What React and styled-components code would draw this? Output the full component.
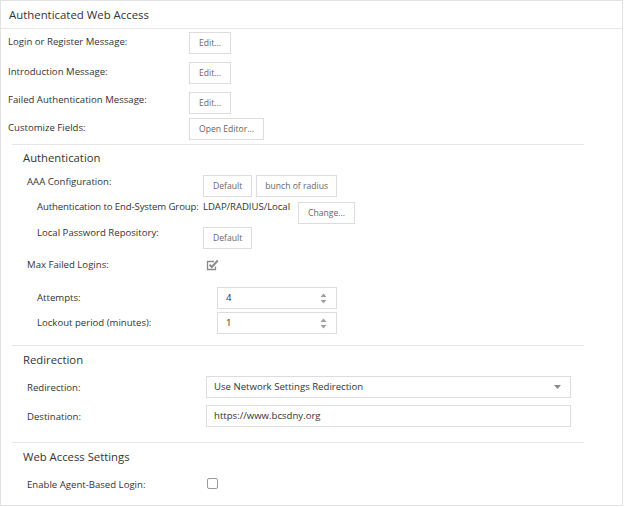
import React from "react";
import styled, { createGlobalStyle } from "styled-components";

const GlobalStyle = createGlobalStyle`
  html, body {
    margin: 0;
    padding: 0;
    background: #fff;
  }
  body {
    font-family: "Open Sans", "Noto Sans", sans-serif;
    color: #333;
  }
`;

const Panel = styled.div`
  width: 623px;
  height: 506px;
  box-sizing: border-box;
  border: 1px solid #e2e2e2;
  background: #fff;
`;

const PanelHeader = styled.div`
  height: 28px;
  box-sizing: border-box;
  border-bottom: 1px solid #e6e6e6;
  padding-left: 8px;
  font-size: 11.4px;
  line-height: 27px;
  color: #333;
`;

const TopBody = styled.div`
  padding-left: 7px;
  padding-bottom: 4px;
`;

const Section = styled.div`
  margin-left: 11px;
  width: 572px;
  border-top: 1px solid #e6e6e6;
  padding-bottom: ${(p) => p.$pb || 0}px;
`;

const SectionTitle = styled.div`
  margin-top: ${(p) => p.$mt}px;
  padding-left: 11px;
  font-size: 11.3px;
  line-height: 16px;
  color: #333;
`;

const Row = styled.div`
  display: flex;
  align-items: flex-start;
  margin-top: ${(p) => p.$mt || 0}px;
  padding-left: ${(p) => p.$indent || 0}px;
`;

const Label = styled.div`
  flex: 0 0 ${(p) => p.$w}px;
  padding-top: ${(p) => p.$pt || 0}px;
  font-size: 9.6px;
  line-height: 14px;
  letter-spacing: ${(p) => p.$ls || 0}px;
  color: #333;
  white-space: nowrap;
`;

const Value = styled.div`
  font-size: 9.6px;
  line-height: 14px;
  letter-spacing: -0.05px;
  color: #333;
  white-space: nowrap;
`;

const Buttons = styled.div`
  display: flex;
  gap: 4px;
  margin-top: ${(p) => p.$mt || 0}px;
  margin-left: ${(p) => p.$ml || 0}px;
`;

const Button = styled.button`
  height: 22px;
  box-sizing: border-box;
  padding: 0 ${(p) => p.$px || 9}px;
  border: 1px solid #dddddd;
  border-radius: 0;
  background: #fff;
  font-family: "Open Sans", "Noto Sans", sans-serif;
  font-size: 8.6px;
  color: #666;
  cursor: pointer;
`;

const Field = styled.div`
  position: relative;
  width: ${(p) => p.$w}px;
  height: 22px;
  box-sizing: border-box;
  border: 1px solid #dddddd;
  background: #fff;
  padding-left: ${(p) => p.$pl}px;
  font-size: 9.6px;
  line-height: 20px;
  color: #333;
`;

const Spinner = styled.svg`
  position: absolute;
  right: 9px;
  top: 5px;
`;

const Caret = styled.svg`
  position: absolute;
  right: 9px;
  top: 8px;
`;

const CheckIcon = styled.svg`
  margin-top: ${(p) => p.$mt || 0}px;
  display: block;
`;

const EmptyBox = styled.span`
  display: block;
  width: 11px;
  height: 11px;
  box-sizing: border-box;
  border: 1px solid #9a9a9a;
  border-radius: 2px;
  background: #fff;
`;

const SpinArrows = () => (
  <Spinner width="7" height="11" viewBox="0 0 7 11">
    <path d="M0.5 4 L3.5 0.5 L6.5 4 Z" fill="#a0a0a0" />
    <path d="M0.5 7 L3.5 10.5 L6.5 7 Z" fill="#a0a0a0" />
  </Spinner>
);

const CheckedBox = () => (
  <CheckIcon $mt={1} width="13" height="12" viewBox="0 0 13 12">
    <path
      d="M9.5 7.5 V10.5 H1.5 V2.5 H8"
      fill="none"
      stroke="#8a8a8a"
      strokeWidth="1.3"
    />
    <path
      d="M3.5 5.8 L5.8 8 L11.8 1.5"
      fill="none"
      stroke="#8a8a8a"
      strokeWidth="2"
    />
  </CheckIcon>
);

export default function App() {
  return (
    <>
      <GlobalStyle />
      <Panel>
        <PanelHeader>Authenticated Web Access</PanelHeader>

        <TopBody>
          <Row $mt={3}>
            <Label $w={181} $pt={3}>Login or Register Message:</Label>
            <Button>Edit...</Button>
          </Row>
          <Row $mt={8}>
            <Label $w={181} $pt={3}>Introduction Message:</Label>
            <Button>Edit...</Button>
          </Row>
          <Row $mt={8}>
            <Label $w={181} $pt={1}>Failed Authentication Message:</Label>
            <Button>Edit...</Button>
          </Row>
          <Row $mt={4}>
            <Label $w={181} $pt={3}>Customize Fields:</Label>
            <Button>Open Editor...</Button>
          </Row>
        </TopBody>

        <Section $pb={11}>
          <SectionTitle $mt={5}>Authentication</SectionTitle>
          <Row $mt={9} $indent={15}>
            <Label $w={176}>AAA Configuration:</Label>
            <Buttons>
              <Button>Default</Button>
              <Button $px={8}>bunch of radius</Button>
            </Buttons>
          </Row>
          <Row $mt={3} $indent={25}>
            <Label $w={166} $ls={-0.12}>Authentication to End-System Group:</Label>
            <Value>LDAP/RADIUS/Local</Value>
            <Buttons $mt={2} $ml={8}>
              <Button>Change...</Button>
            </Buttons>
          </Row>
          <Row $mt={2} $indent={25}>
            <Label $w={166}>Local Password Repository:</Label>
            <Buttons $mt={1}>
              <Button>Default</Button>
            </Buttons>
          </Row>
          <Row $mt={9} $indent={15}>
            <Label $w={179}>Max Failed Logins:</Label>
            <CheckedBox />
          </Row>
          <Row $mt={15} $indent={25}>
            <Label $w={180} $pt={4}>Attempts:</Label>
            <Field $w={120} $pl={8}>
              4
              <SpinArrows />
            </Field>
          </Row>
          <Row $mt={3} $indent={25}>
            <Label $w={180} $pt={4}>Lockout period (minutes):</Label>
            <Field $w={120} $pl={8}>
              1
              <SpinArrows />
            </Field>
          </Row>
        </Section>

        <Section $pb={15}>
          <SectionTitle $mt={6}>Redirection</SectionTitle>
          <Row $mt={8} $indent={15}>
            <Label $w={179} $pt={5}>Redirection:</Label>
            <Field $w={365} $pl={7}>
              Use Network Settings Redirection
              <Caret width="7" height="4" viewBox="0 0 7 4">
                <path d="M0 0 H7 L3.5 4 Z" fill="#8a8a8a" />
              </Caret>
            </Field>
          </Row>
          <Row $mt={7} $indent={15}>
            <Label $w={179} $pt={5}>Destination:</Label>
            <Field $w={365} $pl={7}>https://www.bcsdny.org</Field>
          </Row>
        </Section>

        <Section>
          <SectionTitle $mt={6}>Web Access Settings</SectionTitle>
          <Row $mt={13} $indent={15}>
            <Label $w={180}>Enable Agent-Based Login:</Label>
            <EmptyBox />
          </Row>
        </Section>
      </Panel>
    </>
  );
}
